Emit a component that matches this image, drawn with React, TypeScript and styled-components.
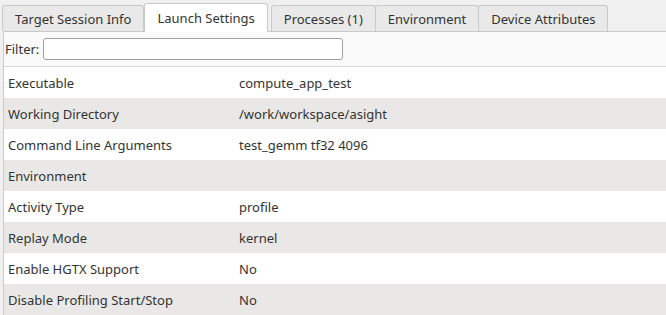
import React from "react";
import styled, { createGlobalStyle } from "styled-components";

const GlobalStyle = createGlobalStyle`
    html, body {
        margin: 0;
        padding: 0;
        background: #f0f0f0;
    }
    body {
        font-family: "Noto Sans", "Open Sans", sans-serif;
        font-size: 13px;
        color: #333;
    }
`;

const Window = styled.div`
    width: 666px;
    height: 315px;
    overflow: hidden;
    background: #f0f0f0;
    display: flex;
    flex-direction: column;
`;

const TabBar = styled.div`
    display: flex;
    align-items: flex-end;
    height: 32px;
    padding-left: 3px;
`;

const Tab = styled.div<{ $active?: boolean }>`
    height: ${(p) => (p.$active ? "29px" : "26px")};
    padding: 0 12px;
    display: flex;
    align-items: center;
    box-sizing: border-box;
    border: 1px solid #c9c9c9;
    border-bottom: none;
    border-radius: 3px 3px 0 0;
    background: ${(p) => (p.$active ? "#ffffff" : "#e9e9e9")};
    margin-bottom: ${(p) => (p.$active ? "-1px" : "0")};
    margin-left: ${(p) => (p.$active ? "0" : "-1px")};
    margin-right: ${(p) => (p.$active ? "4px" : "0")};
    color: #333;
    white-space: nowrap;
    position: relative;
    z-index: ${(p) => (p.$active ? 1 : 0)};
`;

const Pane = styled.div`
    flex: 1;
    margin-left: 3px;
    border-top: 1px solid #c9c9c9;
    border-left: 1px solid #c9c9c9;
    background: #fafafa;
    display: flex;
    flex-direction: column;
`;

const FilterRow = styled.div`
    display: flex;
    align-items: center;
    gap: 4px;
    height: 33px;
    padding-left: 1px;
`;

const FilterInput = styled.div`
    width: 300px;
    height: 22px;
    box-sizing: border-box;
    border: 1px solid #a0a0a0;
    border-radius: 3px;
    background: #fff;
`;

const Table = styled.div`
    border-top: 1px solid #d8d8d8;
    margin-top: 1px;
    display: flex;
    flex-direction: column;
`;

const Row = styled.div<{ $alt?: boolean }>`
    display: grid;
    grid-template-columns: 231px 1fr;
    align-items: center;
    height: 31px;
    padding-left: 4px;
    background: ${(p) => (p.$alt ? "#e9e8e6" : "#ffffff")};
    color: #333;
`;

const rows: [string, string][] = [
    ["Executable", "compute_app_test"],
    ["Working Directory", "/work/workspace/asight"],
    ["Command Line Arguments", "test_gemm tf32 4096"],
    ["Environment", ""],
    ["Activity Type", "profile"],
    ["Replay Mode", "kernel"],
    ["Enable HGTX Support", "No"],
    ["Disable Profiling Start/Stop", "No"],
];

const tabs = ["Target Session Info", "Launch Settings", "Processes (1)", "Environment", "Device Attributes"];

export default function App() {
    return (
        <Window>
            <GlobalStyle />
            <TabBar>
                {tabs.map((t, i) => (
                    <Tab key={t} $active={i === 1}>{t}</Tab>
                ))}
            </TabBar>
            <Pane>
                <FilterRow>
                    <span>Filter:</span>
                    <FilterInput />
                </FilterRow>
                <Table>
                    {rows.map(([k, v], i) => (
                        <Row key={k} $alt={i % 2 === 1}>
                            <span>{k}</span>
                            <span>{v}</span>
                        </Row>
                    ))}
                </Table>
            </Pane>
        </Window>
    );
}
